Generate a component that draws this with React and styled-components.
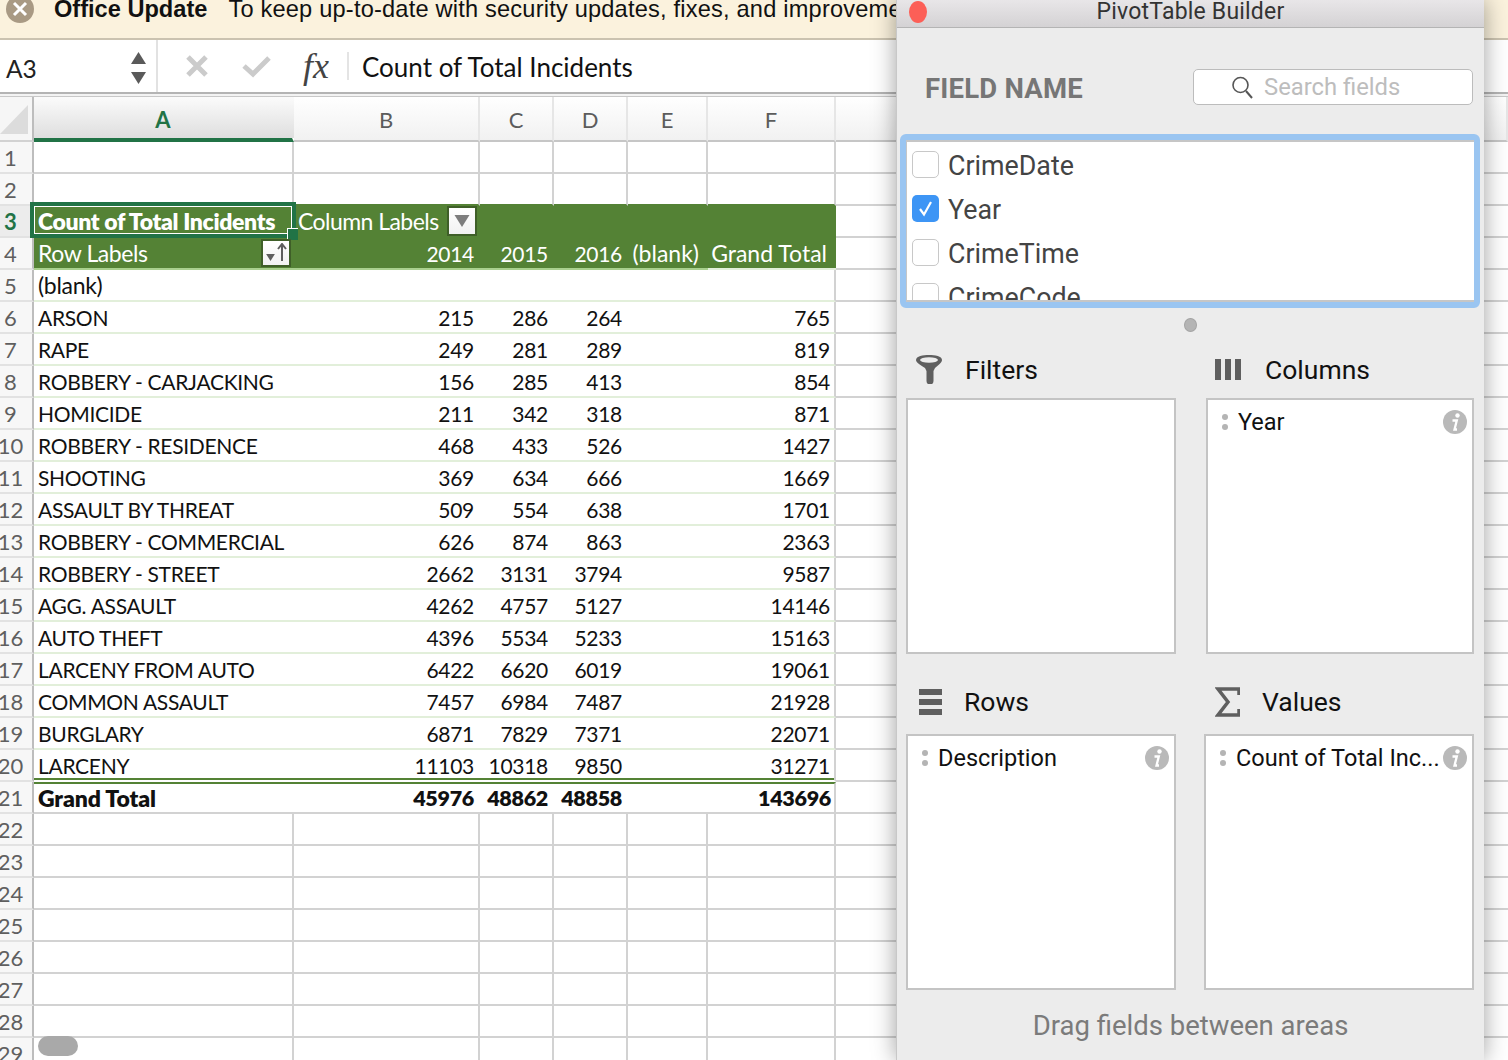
import React from 'react';
import styled, { createGlobalStyle } from 'styled-components';

const GRID = '#d2d2d2';
const GREEN = '#548235';
const XL = '#217346';
const CALIBRI = "Lato, 'Open Sans', sans-serif";
const SF = "Roboto, 'Noto Sans', sans-serif";

const Global = createGlobalStyle`
  html, body { margin: 0; padding: 0; background: #fff; }
  * { box-sizing: border-box; }
`;

const Page = styled.div`
  position: relative;
  width: 1508px;
  height: 1060px;
  overflow: hidden;
  font-family: ${CALIBRI};
  background: #fff;
`;

/* update banner */
const Banner = styled.div`
  display: flex;
  height: 40px;
  overflow: hidden;
  padding-left: 6px;
  background: #fbf2dd;
  border-bottom: 2px solid #cbc3b0;
  font-family: 'Liberation Sans', Arial, sans-serif;
  font-size: 23.6px;
  line-height: 18px;
  color: #111;
  white-space: nowrap;
`;

const BannerClose = styled.div`
  flex: none;
  width: 28px;
  height: 28px;
  margin: -5px 20px 0 0;
  border-radius: 50%;
  background: #a99a84;
  display: flex;
  align-items: center;
  justify-content: center;
`;

const BannerTitle = styled.b`
  margin-right: 21px;
  font-weight: 700;
`;

const BannerText = styled.span`
  width: 668px;
  overflow: hidden;
  letter-spacing: 0.2px;
`;

/* formula bar */
const FormulaBar = styled.div`
  display: flex;
  align-items: center;
  height: 54px;
  background: #fff;
  border-bottom: 2px solid #b4b4b4;
`;

const NameBox = styled.div`
  display: flex;
  align-items: center;
  justify-content: space-between;
  width: 158px;
  height: 100%;
  padding: 4px 10px 0 6px;
  border-right: 2px solid #e2e2e2;
  font-size: 24.5px;
  color: #222;
`;

const Spinner = styled.div`
  display: flex;
  flex-direction: column;
  gap: 8px;
`;

const FormulaIcons = styled.div`
  display: flex;
  align-items: center;
  width: 189px;
  height: 100%;
  padding-left: 27px;
`;

const FxLabel = styled.i`
  font-family: 'Liberation Serif', serif;
  font-size: 36px;
  color: #444;
  margin-left: 31px;
`;

const FormulaText = styled.div`
  height: 28px;
  padding-left: 13px;
  border-left: 2px solid #e4e4e4;
  font-size: 26px;
  line-height: 30px;
  color: #111;
  white-space: nowrap;
`;

const BarGap = styled.div`
  height: 3px;
  background: #f3f3f3;
  border-bottom: 1px solid #c8c8c8;
`;

/* sheet */
const Row = styled.div`
  display: grid;
  grid-template-columns: 34px 260px 186px 74px 74px 80px 128px 1fr;
  height: ${p => p.$h || 32}px;
`;

const Corner = styled.div`
  background: #f6f6f6;
  border-right: 2px solid #bdbdbd;
  border-bottom: 2px solid ${GRID};
  display: flex;
  padding: 8px 4px 6px 0;
`;

const ColHead = styled.div`
  display: flex;
  align-items: center;
  justify-content: center;
  padding-top: ${p => (p.$active ? 4 : 2)}px;
  font-size: 22px;
  font-weight: ${p => (p.$active ? 700 : 400)};
  color: ${p => (p.$active ? XL : '#5c5c5c')};
  background: ${p => (p.$active ? 'linear-gradient(#fbfbfb, #dedede)' : 'linear-gradient(#fff, #f1f1f1)')};
  border-right: 2px solid ${p => (p.$active ? 'transparent' : '#e6e6e6')};
  border-bottom: ${p => (p.$active ? `4px solid ${XL}` : '2px solid #c6c6c6')};
`;

const RowHead = styled.div`
  display: flex;
  align-items: center;
  justify-content: center;
  padding-right: 11px;
  font-size: 22px;
  font-weight: ${p => (p.$active ? 700 : 400)};
  color: ${p => (p.$active ? XL : '#5f5f5f')};
  background: ${p => (p.$active ? '#ececec' : '#f7f7f7')};
  border-right: 2px solid #bdbdbd;
  border-bottom: 2px solid #e2e2e2;
  white-space: nowrap;
`;

const Cell = styled.div`
  position: relative;
  display: flex;
  align-items: center;
  justify-content: ${p => (p.$right ? 'flex-end' : 'flex-start')};
  min-width: 0;
  padding: 0 ${p => p.$pr ?? 4}px 0 4px;
  font-size: ${p => p.$size || 23}px;
  letter-spacing: ${p => p.$spacing ?? '-0.3px'};
  font-weight: ${p => (p.$bold ? 800 : 400)};
  color: ${p => (p.$green ? '#fff' : '#111')};
  background: ${p => (p.$green ? GREEN : '#fff')};
  border-right: ${p => (p.$vline ? `2px solid ${GRID}` : 'none')};
  border-bottom: 2px solid ${p => p.$under || GRID};
  border-top: ${p => (p.$topGreen ? `2px solid ${GREEN}` : 'none')};
  box-shadow: ${p => (p.$doubled ? `inset 0 -2px 0 ${GREEN}` : 'none')};
  white-space: nowrap;
`;

const Selection = styled.div`
  position: absolute;
  z-index: 2;
  top: -4px;
  left: -4px;
  right: -2px;
  bottom: -2px;
  border: 4px solid ${XL};
  box-shadow: inset 0 0 0 1px #fff;
  pointer-events: none;
`;

const CellText = styled.span`
  position: relative;
  z-index: 3;
`;

const FillHandle = styled.div`
  position: absolute;
  z-index: 4;
  right: -4px;
  bottom: -4px;
  width: 11px;
  height: 12px;
  background: ${XL};
  border-left: 1px solid #fff;
  border-top: 1px solid #fff;
`;

const FilterButton = styled.div`
  margin-left: auto;
  flex: none;
  display: flex;
  align-items: ${p => (p.$split ? 'flex-end' : 'center')};
  justify-content: ${p => (p.$split ? 'space-between' : 'center')};
  width: 30px;
  height: ${p => p.$h}px;
  padding: ${p => (p.$split ? '0 2px 4px' : '0')};
  background: linear-gradient(#fff, #f2f2f2);
  border: 2px solid #3f5f28;
  position: relative;
  z-index: 5;
`;

const ScrollPill = styled.div`
  position: absolute;
  left: 38px;
  top: 1036px;
  width: 40px;
  height: 20px;
  border-radius: 10px;
  background: #a9a9a9;
`;

/* pivot table builder window */
const BuilderWindow = styled.aside`
  position: absolute;
  z-index: 10;
  top: 0;
  left: 896px;
  width: 588px;
  height: 1060px;
  background: #ececec;
  box-shadow: 0 0 22px rgba(0, 0, 0, 0.38);
  border-left: 1px solid #c8c8c8;
  font-family: ${SF};
`;

const TitleBar = styled.header`
  position: relative;
  height: 28px;
  background: linear-gradient(#e8e6e8, #d4d2d4);
  border-bottom: 1px solid #b4b4b4;
  text-align: center;
  font-size: 23px;
  line-height: 24px;
  letter-spacing: 0.2px;
  color: #333;
`;

const CloseDot = styled.span`
  position: absolute;
  left: 12px;
  top: 1px;
  width: 18px;
  height: 22px;
  border-radius: 50%;
  background: #fc5f57;
`;

const FieldHeader = styled.div`
  display: flex;
  align-items: center;
  justify-content: space-between;
  margin-top: 41px;
  padding: 0 11px 0 28px;
`;

const FieldName = styled.h2`
  margin: 0;
  padding-top: 3px;
  font-size: 27.5px;
  font-weight: 700;
  letter-spacing: 0.2px;
  color: #767676;
`;

const SearchBox = styled.div`
  display: flex;
  align-items: center;
  gap: 11px;
  width: 280px;
  height: 36px;
  padding-left: 37px;
  background: #fff;
  border: 1.5px solid #bcbcbc;
  border-radius: 5px;
  font-size: 23.8px;
  color: #bdbdbd;
`;

const FieldList = styled.div`
  margin: 29px 4px 0 3px;
  height: 174px;
  border: 6px solid #9ac5f1;
  border-radius: 6px;
`;

const FieldListInner = styled.div`
  height: 100%;
  overflow: hidden;
  background: #fff;
  border: 2px solid #c6c6c6;
  border-width: 2px 0 2px 1px;
`;

const FieldRow = styled.label`
  display: flex;
  align-items: center;
  gap: 9px;
  height: 44px;
  padding-left: 5px;
  font-size: 26.8px;
  color: #444;
`;

const FieldLabel = styled.span`
  padding-top: 3px;
`;

const CheckBox = styled.span`
  flex: none;
  display: flex;
  align-items: center;
  justify-content: center;
  width: 27px;
  height: 27px;
  border-radius: 5px;
  background: ${p => (p.$on ? '#3d95f5' : '#fff')};
  border: ${p => (p.$on ? 'none' : '1.5px solid #c8c8c8')};
`;

const SplitHandle = styled.div`
  display: flex;
  align-items: center;
  justify-content: center;
  height: 34px;
  &::after {
    content: '';
    width: 11px;
    height: 12px;
    border-radius: 50%;
    background: #b4b4b4;
    border: 1px solid #a4a4a4;
  }
`;

const AreaRow = styled.div`
  display: flex;
  justify-content: space-between;
  padding: 0 10px 0 9px;
`;

const Area = styled.section`
  width: ${p => p.$w}px;
`;

const AreaHeading = styled.div`
  display: flex;
  align-items: center;
  height: ${p => p.$h}px;
  margin-top: ${p => p.$mt || 0}px;
  padding-left: ${p => p.$pl}px;
  padding-bottom: ${p => p.$pb || 0}px;
  font-size: 26.5px;
  color: #111;
`;

const HeadingIcon = styled.span`
  display: flex;
  align-items: center;
  width: ${p => p.$w}px;
  flex: none;
`;

const DropBox = styled.div`
  height: 256px;
  background: #fff;
  border: 2px solid #c4c4c4;
`;

const PillRow = styled.div`
  display: flex;
  align-items: center;
  height: 44px;
  padding: 0 5px 0 14px;
  font-size: 23.5px;
  color: #111;
  white-space: nowrap;
`;

const Grip = styled.span`
  flex: none;
  display: flex;
  flex-direction: column;
  gap: 4px;
  margin-right: 10px;
  &::before, &::after {
    content: '';
    width: 6px;
    height: 6px;
    border-radius: 50%;
    background: #b4b4b4;
  }
`;

const PillLabel = styled.span`
  flex: 1;
  min-width: 0;
`;

const Hint = styled.div`
  margin-top: 17px;
  text-align: center;
  font-size: 27.5px;
  line-height: 38px;
  color: #7b7b7b;
`;

const Tri = ({ down, w = 15, h = 12, fill = '#5a5a5a' }) => (
  <svg width={w} height={h} viewBox="0 0 10 8">
    <path d={down ? 'M0 0H10L5 8Z' : 'M5 0L10 8H0Z'} fill={fill} />
  </svg>
);

const InfoIcon = () => (
  <svg width="24" height="24" viewBox="0 0 24 24" style={{ flex: 'none' }}>
    <circle cx="12" cy="12" r="12" fill="#b9b9b9" />
    <circle cx="14.500" cy="5.500" r="2.200" fill="#fff" />
    <path d="M9.500 10.500h4.300l-2.300 9h2.500" fill="none" stroke="#fff" strokeWidth="2.300" />
  </svg>
);

const COLUMNS = ['B', 'C', 'D', 'E', 'F'];

const DATA = [
  ['(blank)', '', '', '', ''],
  ['ARSON', '215', '286', '264', '765'],
  ['RAPE', '249', '281', '289', '819'],
  ['ROBBERY - CARJACKING', '156', '285', '413', '854'],
  ['HOMICIDE', '211', '342', '318', '871'],
  ['ROBBERY - RESIDENCE', '468', '433', '526', '1427'],
  ['SHOOTING', '369', '634', '666', '1669'],
  ['ASSAULT BY THREAT', '509', '554', '638', '1701'],
  ['ROBBERY - COMMERCIAL', '626', '874', '863', '2363'],
  ['ROBBERY - STREET', '2662', '3131', '3794', '9587'],
  ['AGG. ASSAULT', '4262', '4757', '5127', '14146'],
  ['AUTO THEFT', '4396', '5534', '5233', '15163'],
  ['LARCENY FROM AUTO', '6422', '6620', '6019', '19061'],
  ['COMMON ASSAULT', '7457', '6984', '7487', '21928'],
  ['BURGLARY', '6871', '7829', '7371', '22071'],
  ['LARCENY', '11103', '10318', '9850', '31271'],
];

const LIGHT = '#e2efda';
const NUM = 21;

function GridRow({ n, under }) {
  return (
    <Row>
      <RowHead>{n}</RowHead>
      <Cell $vline $under={under} />
      <Cell $vline $under={under} />
      <Cell $vline $under={under} />
      <Cell $vline $under={under} />
      <Cell $vline $under={under} />
      <Cell $vline $under={under} />
      <Cell />
    </Row>
  );
}

function DataRow({ n, values, last }) {
  const [label, b, c, d, f] = values;
  const props = last ? { $under: '#fff', $doubled: true } : { $under: LIGHT };
  return (
    <Row>
      <RowHead>{n}</RowHead>
      <Cell $size={label === '(blank)' ? 23 : NUM} {...props}>{label}</Cell>
      <Cell $right $pr={6} $size={NUM} {...props}>{b}</Cell>
      <Cell $right $pr={6} $size={NUM} {...props}>{c}</Cell>
      <Cell $right $pr={6} $size={NUM} {...props}>{d}</Cell>
      <Cell {...props} />
      <Cell $right $vline $size={NUM} {...props}>{f}</Cell>
      <Cell />
    </Row>
  );
}

function Sheet() {
  return (
    <div>
      <Row $h={45}>
        <Corner>
          <svg width="28" height="29" viewBox="0 0 28 29">
            <path d="M28 0V29H0Z" fill="#dcdcdc" />
          </svg>
        </Corner>
        <ColHead $active>A</ColHead>
        {COLUMNS.map(c => <ColHead key={c}>{c}</ColHead>)}
        <ColHead>G</ColHead>
      </Row>
      <GridRow n={1} />
      <Row>
        <RowHead>2</RowHead>
        <Cell $vline $under={XL} />
        {[0, 1, 2, 3].map(i => <Cell key={i} $vline $under={GREEN} />)}
        <Cell $under={GREEN} $vline />
        <Cell />
      </Row>
      <Row>
        <RowHead $active>3</RowHead>
        <Cell $green $bold $under={GREEN} $spacing="-0.35px">
          <Selection />
          <FillHandle />
          <CellText>Count of Total Incidents</CellText>
        </Cell>
        <Cell $green $pr={3} $under={GREEN} $spacing="-0.55px">
          Column Labels
          <FilterButton $h={30}>
            <Tri down w={18} h={12} fill="#7d7d7d" />
          </FilterButton>
        </Cell>
        <Cell $green $under={GREEN} />
        <Cell $green $under={GREEN} />
        <Cell $green $under={GREEN} />
        <Cell $green $under={GREEN} />
        <Cell />
      </Row>
      <Row>
        <RowHead>4</RowHead>
        <Cell $green $pr={3} $under="#a9d08e" $spacing="-0.4px">
          Row Labels
          <FilterButton $h={28} $split>
            <Tri down w={11} h={7} fill="#5e5e5e" />
            <svg width="10" height="18" viewBox="0 0 10 18">
              <path d="M5 18V2M1 6l4-5 4 5" fill="none" stroke="#5e5e5e" strokeWidth="2" />
            </svg>
          </FilterButton>
        </Cell>
        <Cell $green $right $pr={6} $size={NUM} $under="#a9d08e">2014</Cell>
        <Cell $green $right $pr={6} $size={NUM} $under="#a9d08e">2015</Cell>
        <Cell $green $right $pr={6} $size={NUM} $under="#a9d08e">2016</Cell>
        <Cell $green $right $pr={9} $under="#a9d08e" $spacing="0">(blank)</Cell>
        <Cell $green $right $pr={9} $under={LIGHT} $spacing="0">Grand Total</Cell>
        <Cell />
      </Row>
      {DATA.map((values, i) => (
        <DataRow key={values[0]} n={i + 5} values={values} last={i === DATA.length - 1} />
      ))}
      <Row>
        <RowHead>21</RowHead>
        <Cell $bold $topGreen $spacing="-0.1px">Grand Total</Cell>
        <Cell $bold $topGreen $right $pr={6} $size={21.5}>45976</Cell>
        <Cell $bold $topGreen $right $pr={6} $size={21.5}>48862</Cell>
        <Cell $bold $topGreen $right $pr={6} $size={21.5}>48858</Cell>
        <Cell $topGreen />
        <Cell $bold $topGreen $right $vline $pr={3} $size={21.5}>143696</Cell>
        <Cell />
      </Row>
      {[22, 23, 24, 25, 26, 27, 28, 29].map(n => <GridRow key={n} n={n} />)}
    </div>
  );
}

function FieldItem({ label, checked }) {
  return (
    <FieldRow>
      <CheckBox $on={checked}>
        {checked && (
          <svg width="17" height="17" viewBox="0 0 17 17">
            <path d="M3 9l4 5.500L14 2" fill="none" stroke="#fff" strokeWidth="2.200" />
          </svg>
        )}
      </CheckBox>
      <FieldLabel>{label}</FieldLabel>
    </FieldRow>
  );
}

function Pill({ label }) {
  return (
    <PillRow>
      <Grip />
      <PillLabel>{label}</PillLabel>
      <InfoIcon />
    </PillRow>
  );
}

function Builder() {
  return (
    <BuilderWindow>
      <TitleBar>
        <CloseDot />
        PivotTable Builder
      </TitleBar>
      <FieldHeader>
        <FieldName>FIELD NAME</FieldName>
        <SearchBox>
          <svg width="22" height="24" viewBox="0 0 22 24">
            <circle cx="9.500" cy="10" r="7.500" fill="none" stroke="#555" strokeWidth="1.600" />
            <path d="M15 16l6 7" stroke="#555" strokeWidth="2" />
          </svg>
          Search fields
        </SearchBox>
      </FieldHeader>
      <FieldList>
        <FieldListInner>
          <FieldItem label="CrimeDate" />
          <FieldItem label="Year" checked />
          <FieldItem label="CrimeTime" />
          <FieldItem label="CrimeCode" />
        </FieldListInner>
      </FieldList>
      <SplitHandle />
      <AreaRow>
        <Area $w={270}>
          <AreaHeading $h={56} $pb={2} $pl={9}>
            <HeadingIcon $w={50}>
              <svg width="28" height="30" viewBox="0 0 28 30">
                <path d="M1 6C1 2 8 1 14 1s13 1 13 5c0 3-4 5-7 8l-1.500 3v10a3.500 3.500 0 0 1-7 0V17L10 14C6 11 1 9 1 6Z" fill="#5f5f5f" />
                <ellipse cx="14" cy="6" rx="9" ry="2.800" fill="#ececec" />
              </svg>
            </HeadingIcon>
            Filters
          </AreaHeading>
          <DropBox />
        </Area>
        <Area $w={268}>
          <AreaHeading $h={56} $pb={2} $pl={9}>
            <HeadingIcon $w={50}>
              <svg width="27" height="21" viewBox="0 0 27 21">
                <path d="M0 0h6v21H0zM10 0h6v21h-6zM20 0h6v21h-6z" fill="#5f5f5f" />
              </svg>
            </HeadingIcon>
            Columns
          </AreaHeading>
          <DropBox>
            <Pill label="Year" />
          </DropBox>
        </Area>
      </AreaRow>
      <AreaRow>
        <Area $w={270}>
          <AreaHeading $h={65} $mt={15} $pl={13}>
            <HeadingIcon $w={45}>
              <svg width="23" height="26" viewBox="0 0 23 26">
                <path d="M0 0h23v6H0zM0 10h23v6H0zM0 20h23v6H0z" fill="#5f5f5f" />
              </svg>
            </HeadingIcon>
            Rows
          </AreaHeading>
          <DropBox>
            <Pill label="Description" />
          </DropBox>
        </Area>
        <Area $w={270}>
          <AreaHeading $h={65} $mt={15} $pl={11}>
            <HeadingIcon $w={47}>
              <svg width="25" height="30" viewBox="0 0 25 30">
                <path d="M24 8V2H3l10 13L3 28h21v-6" fill="none" stroke="#5f5f5f" strokeWidth="3.500" />
              </svg>
            </HeadingIcon>
            Values
          </AreaHeading>
          <DropBox>
            <Pill label="Count of Total Inc..." />
          </DropBox>
        </Area>
      </AreaRow>
      <Hint>Drag fields between areas</Hint>
    </BuilderWindow>
  );
}

export default function App() {
  return (
    <Page>
      <Global />
      <Banner>
        <BannerClose>
          <svg width="16" height="16" viewBox="0 0 16 16">
            <path d="M2 2l12 12M14 2L2 14" stroke="#fff" strokeWidth="3" />
          </svg>
        </BannerClose>
        <BannerTitle>Office Update</BannerTitle>
        <BannerText>To keep up-to-date with security updates, fixes, and improvements</BannerText>
      </Banner>
      <FormulaBar>
        <NameBox>
          A3
          <Spinner>
            <Tri />
            <Tri down />
          </Spinner>
        </NameBox>
        <FormulaIcons>
          <svg width="24" height="24" viewBox="0 0 24 24">
            <path d="M3 3l18 18M21 3L3 21" stroke="#cbcbcb" strokeWidth="5" />
          </svg>
          <svg width="30" height="24" viewBox="0 0 30 24" style={{ marginLeft: 33 }}>
            <path d="M2 12l9 8L27 4" fill="none" stroke="#cbcbcb" strokeWidth="5" />
          </svg>
          <FxLabel>fx</FxLabel>
        </FormulaIcons>
        <FormulaText>Count of Total Incidents</FormulaText>
      </FormulaBar>
      <BarGap />
      <Sheet />
      <ScrollPill />
      <Builder />
    </Page>
  );
}
